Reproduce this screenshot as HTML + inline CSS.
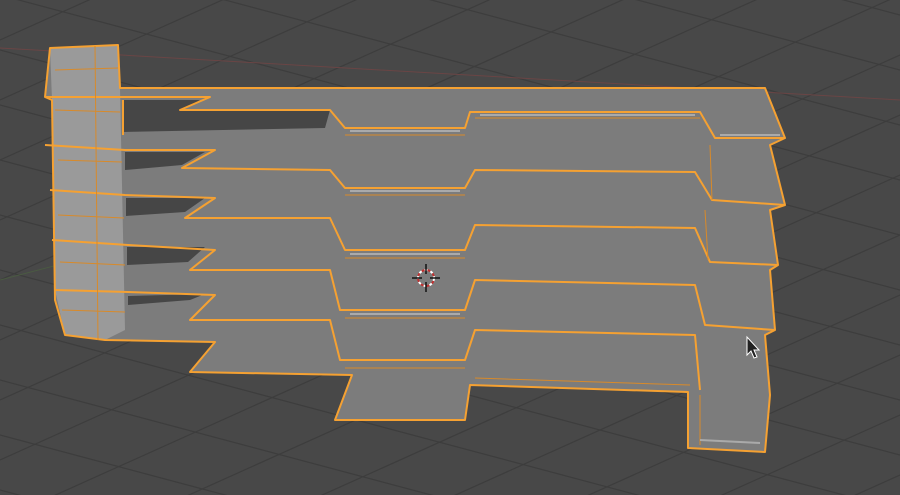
<!DOCTYPE html>
<html><head><meta charset="utf-8"><style>
html,body{margin:0;padding:0;background:#484848;overflow:hidden;width:900px;height:495px}
svg{display:block;position:absolute;left:0;top:0}
</style></head><body>
<svg width="900" height="495" viewBox="0 0 900 495" xmlns="http://www.w3.org/2000/svg">
<rect width="900" height="495" fill="#484848"/>
<g stroke="#3d3d3d" stroke-width="1.2" fill="none">
<path d="M0,-60 L900,180 M0,-5 L900,235 M0,50 L900,290 M0,105 L900,345 M0,160 L900,400 M0,215 L900,455 M0,270 L900,510 M0,325 L900,565 M0,380 L900,620 M0,435 L900,675 M0,490 L900,730 M0,-115 L900,125 M0,-170 L900,70 M0,-225 L900,15 M0,-280 L900,-40"/>
<path d="M0,40 L900,-365 M0,100 L900,-305 M0,160 L900,-245 M0,220 L900,-185 M0,280 L900,-125 M0,340 L900,-65 M0,400 L900,-5 M0,460 L900,55 M0,520 L900,115 M0,580 L900,175 M0,640 L900,235 M0,700 L900,295 M0,760 L900,355 M0,820 L900,415 M0,880 L900,475 M0,940 L900,535"/>
</g>
<path d="M0,48 L900,100" stroke="#6a4545" stroke-width="1"/>
<path d="M0,280 L230,220" stroke="#4a5a42" stroke-width="1"/>

<polygon fill="#7c7c7c" points="50,48 118,45 120,88 765,88 785,138 770,145 785,205 770,210 778,265 770,270 775,330 765,335 770,395 765,452 688,448 688,392 470,385 465,420 335,420 352,375 190,372 215,342 105,340 65,335 55,300 52,100 45,97"/>
<polygon fill="#9a9a9a" points="50,48 118,45 120,88 125,330 105,340 65,335 55,290 52,100"/>

<g fill="#464646">
<polygon points="123,100 200,100 182,110 330,110 325,128 123,132"/>
<polygon points="125,152 205,152 182,165 125,170"/>
<polygon points="126,198 205,198 185,212 126,216"/>
<polygon points="127,247 205,247 188,262 127,265"/>
<polygon points="128,296 205,294 190,300 128,305"/>
</g>

<g fill="none" stroke="#f5a132" stroke-width="2" stroke-linejoin="round">
<polygon points="50,48 118,45 120,88 765,88 785,138 770,145 785,205 770,210 778,265 770,270 775,330 765,335 770,395 765,452 688,448 688,392 470,385 465,420 335,420 352,375 190,372 215,342 105,340 65,335 55,300 52,100 45,97"/>
<polyline points="45,97 120,97 210,97 180,110 330,110 345,128 465,128 470,112 700,112 715,138 785,138"/>
<polyline points="45,145 125,150 215,150 182,168 330,170 345,188 465,188 475,170 695,172 712,200 785,205"/>
<polyline points="50,190 125,195 215,198 185,218 330,218 345,250 465,250 475,225 695,228 710,262 778,265"/>
<polyline points="52,240 128,245 215,250 190,270 330,270 340,310 465,310 475,280 695,285 705,325 775,330"/>
<polyline points="55,290 128,292 215,295 190,320 330,320 340,360 465,360 475,330 695,335 700,390"/>
<polyline points="123,100 123,135 M126,152 126,172 M127,197 127,215 M128,245 128,265 M128,296 128,310"/>
</g>
<g fill="none" stroke="#d88a2a" stroke-width="1">
<path d="M95,46 L98,340 M55,70 L118,68 M55,110 L120,112 M58,160 L122,162 M58,215 L124,218 M60,262 L125,265 M62,310 L125,312"/>
<path d="M345,135 L465,135 M475,118 L700,118 M345,195 L465,195 M345,258 L465,258 M345,318 L465,318 M345,368 L465,368 M475,378 L690,385 M700,395 L700,445 M710,145 L712,200 M705,210 L708,260"/>
</g>
<g stroke="#aaaaaa" stroke-width="2" fill="none">
<path d="M350,131 L460,131 M480,115 L695,115 M720,135 L780,135 M350,191 L460,191 M350,254 L460,254 M350,314 L460,314 M700,440 L760,443"/>
</g>

<g transform="translate(426,278)">
<circle r="8" fill="none" stroke="#ffffff" stroke-width="2" stroke-dasharray="3 3"/>
<circle r="8" fill="none" stroke="#c03030" stroke-width="2" stroke-dasharray="3 3" stroke-dashoffset="3"/>
<path d="M-14,0 L-4,0 M4,0 L14,0 M0,-14 L0,-4 M0,4 L0,14" stroke="#111" stroke-width="1.5"/>
</g>
<path d="M747,337 L747,355 L751,351 L754,358 L757,357 L754,350 L759,350 Z" fill="#222" stroke="#fff" stroke-width="1"/>
</svg>
</body></html>
